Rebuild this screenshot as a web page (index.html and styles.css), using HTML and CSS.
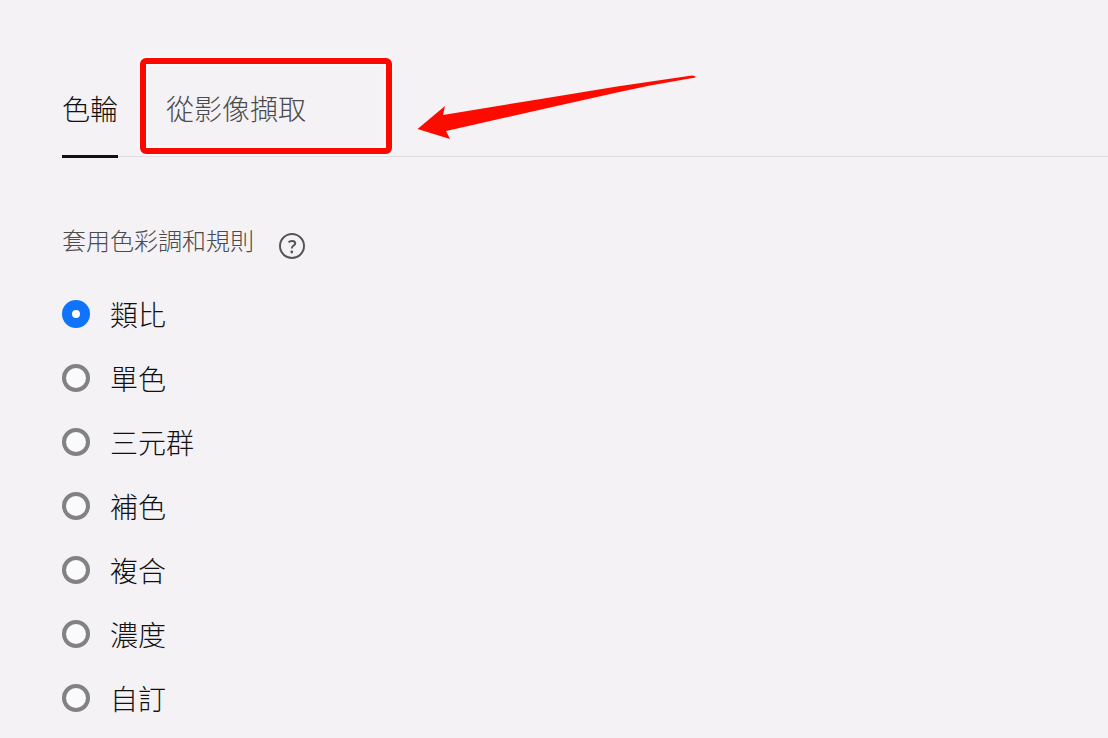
FILE: index.html
```
<!DOCTYPE html>
<html lang="zh-Hant">
<head>
    <meta charset="UTF-8">
    <meta name="viewport" content="width=device-width, initial-scale=1.0">
    <title>色輪</title>
    <link rel="stylesheet" href="styles.css">
</head>
<body>
    <nav class="tabs">
        <a href="#wheel" class="tab selected">色輪</a>
        <a href="#extract" class="tab">從影像擷取</a>
        <span class="highlight"></span>
        <svg class="arrow" width="282" height="68" viewBox="0 0 282 68" aria-hidden="true">
            <path d="M1.5 55 L29 32 L27 41 L134 23.5 L201 12.5 L276 1.5 Q280 1.5 279.5 3.5 L234 11.5 L201 18.5 L134 33.5 L30 57 L34 65 Z"/>
        </svg>
    </nav>

    <form class="rules" id="wheel">
        <div class="rules-head">
            <h2>套用色彩調和規則</h2>
            <button type="button" class="help" aria-label="說明">
                <svg width="28" height="28" viewBox="0 0 28 28">
                    <circle cx="14" cy="14" r="12"/>
                    <path d="M10.6 10.4 C12 8.4 17.2 8.2 17.2 11.4 C17.2 13.6 13.8 13.6 13.8 16.4"/>
                    <circle class="dot" cx="13.8" cy="20" r="1.4"/>
                </svg>
            </button>
        </div>
        <label class="rule"><input type="radio" name="rule" checked>類比</label>
        <label class="rule"><input type="radio" name="rule">單色</label>
        <label class="rule"><input type="radio" name="rule">三元群</label>
        <label class="rule"><input type="radio" name="rule">補色</label>
        <label class="rule"><input type="radio" name="rule">複合</label>
        <label class="rule"><input type="radio" name="rule">濃度</label>
        <label class="rule"><input type="radio" name="rule">自訂</label>
    </form>
</body>
</html>
```
FILE: styles.css
```
body {
	margin: 0;
	padding: 84px 0 0 62px;
	background: #f4f2f5;
	color: #111;
	font-family: "Noto Sans CJK TC", sans-serif;
	font-weight: 300;
}

.tabs {
	position: relative;
	display: flex;
	gap: 48px;
	border-bottom: 1px solid #dedce0;
}

.tab {
	padding-bottom: 23px;
	border-bottom: 3px solid transparent;
	margin-bottom: -2px;
	font-size: 28px;
	line-height: 48px;
	color: #4b4b4e;
	text-decoration: none;
}

.tab.selected {
	color: #111;
	border-bottom-color: #111;
}

/* red marker around the second tab */
.highlight {
	position: absolute;
	left: 78px;
	top: -26px;
	width: 240px;
	height: 84px;
	border: 6px solid #fb0800;
	border-radius: 6px;
	box-shadow: 0 0 3px 1px #fff, inset 0 0 3px 1px #fff;
}

.arrow {
	position: absolute;
	left: 354px;
	top: -10px;
	fill: #fe0b00;
}

.rules-head {
	display: flex;
	align-items: flex-start;
	gap: 24px;
	margin-top: 62px;
	margin-bottom: 21px;
}

h2 {
	margin: 0;
	font-size: 24px;
	font-weight: 300;
	line-height: 42px;
	color: #4b4b4e;
}

.help {
	width: 28px;
	height: 28px;
	margin-top: 13px;
	padding: 0;
	border: none;
	background: none;
}

.help svg {
	display: block;
	fill: none;
	stroke: #565658;
	stroke-width: 2;
}

.help .dot {
	fill: #565658;
	stroke: none;
}

.rule {
	display: flex;
	align-items: center;
	gap: 20px;
	height: 64px;
	font-size: 28px;
}

.rule input {
	appearance: none;
	box-sizing: border-box;
	width: 28px;
	height: 28px;
	margin: 0;
	border: 4px solid #828286;
	border-radius: 50%;
	background: #faf9fb;
}

.rule input:checked {
	border: 10px solid #0f73fb;
	background: #fff;
}
```
